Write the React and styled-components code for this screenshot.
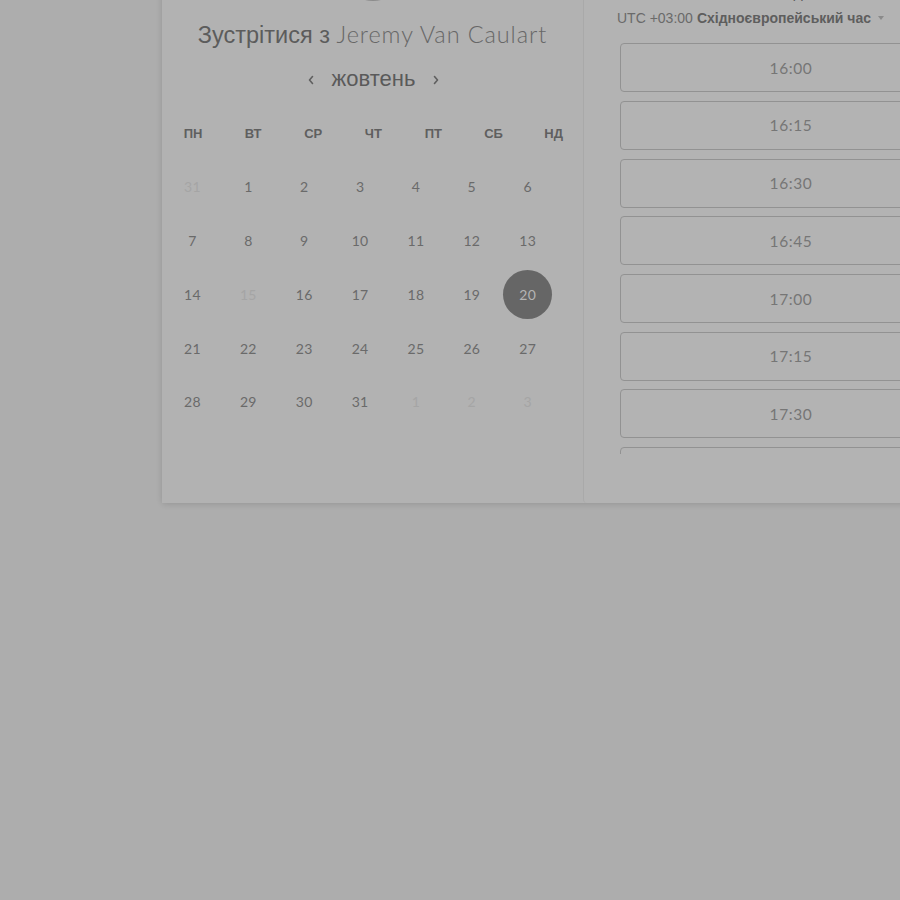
import React from 'react';
import styled, {createGlobalStyle} from 'styled-components';

const GlobalStyle = createGlobalStyle`
  html, body {
    margin: 0;
    padding: 0;
    background: #adadad;
    overflow: hidden;
    height: 900px;
  }
  body {
    font-family: "Liberation Sans", Arial, sans-serif;
  }
`;

const Page = styled.div`
  width: 900px;
  height: 900px;
  overflow: hidden;
`;

const Modal = styled.div`
  display: flex;
  width: 860px;
  height: 603px;
  margin: -100px 0 0 162px;
  background: #b3b3b3;
  border-radius: 4px;
  box-shadow: 0 1px 6px rgba(0, 0, 0, 0.14);
`;

const CalendarPanel = styled.div`
  width: 421px;
  flex-shrink: 0;
  display: flex;
  flex-direction: column;
  align-items: stretch;
  background: #b2b2b2;
`;

const Avatar = styled.div`
  width: 64px;
  height: 64px;
  border-radius: 50%;
  background: #8c8c8c;
  margin: 37px auto 0;
`;

const Title = styled.h1`
  margin: 19px 0 0;
  font-size: 23.5px;
  line-height: 28px;
  font-weight: 400;
  text-align: center;
  color: #5c5c5c;
  font-family: "Liberation Sans", Arial, sans-serif;
  white-space: nowrap;
`;

const Name = styled.span`
  font-family: Lato, "Open Sans", sans-serif;
  font-weight: 300;
  letter-spacing: 0.9px;
  color: #676767;
`;

const MonthRow = styled.div`
  margin-top: 16px;
  height: 30px;
  display: flex;
  align-items: center;
  justify-content: center;
  gap: 14px;
  padding-left: 2px;
`;

const Month = styled.div`
  font-size: 22px;
  color: #5a5a5a;
  padding-bottom: 2px;
`;

const ArrowButton = styled.button`
  border: 0;
  background: none;
  padding: 0;
  width: 14px;
  height: 14px;
  display: flex;
  align-items: center;
  justify-content: center;
  color: #5f5f5f;
`;

const WeekHeader = styled.div`
  margin: 28px 0 0 1px;
  display: grid;
  grid-template-columns: repeat(7, 60.1px);
  height: 20px;
  align-items: center;
`;

const WeekDay = styled.div`
  text-align: center;
  font-size: 13px;
  font-weight: 700;
  color: #5f5f5f;
`;

const DaysGrid = styled.div`
  margin: 17px 0 0 2.6px;
  display: grid;
  grid-template-columns: repeat(7, 55.87px);
  grid-auto-rows: 53.75px;
`;

const DayCell = styled.div`
  display: flex;
  align-items: center;
  justify-content: center;
`;

const Day = styled.div`
  width: 49px;
  height: 49px;
  border-radius: 50%;
  display: flex;
  align-items: center;
  justify-content: center;
  font-family: Lato, "Open Sans", sans-serif;
  font-size: 14px;
  letter-spacing: 0.3px;
  color: ${p => (p.$selected ? '#b4b4b4' : p.$muted ? '#a5a5a5' : '#6a6a6a')};
  background: ${p => (p.$selected ? '#666666' : 'transparent')};
`;

const TimesPanel = styled.div`
  flex: 1;
  border-left: 1px solid #a9a9a9;
  border-radius: 0 0 0 4px;
  padding-left: 33px;
  display: flex;
  flex-direction: column;
  background: #b3b3b3;
`;

const DateHeading = styled.div`
  margin: 83px 0 0 159px;
  font-size: 16px;
  line-height: 20px;
  color: #5c5c5c;
`;

const Timezone = styled.div`
  margin-top: 5px;
  height: 20px;
  display: flex;
  align-items: center;
  font-size: 14px;
  color: #6a6a6a;
  white-space: nowrap;
`;

const ZoneName = styled.b`
  margin-left: 4px;
  color: #5e5e5e;
`;

const Caret = styled.span`
  margin-left: 7px;
  width: 0;
  height: 0;
  border-left: 3.5px solid transparent;
  border-right: 3.5px solid transparent;
  border-top: 4px solid #8a8a8a;
`;

const SlotList = styled.div`
  margin: 15.3px 0 0 3px;
  height: 410.7px;
  overflow: hidden;
  display: flex;
  flex-direction: column;
  gap: 8.7px;
`;

const Slot = styled.button`
  flex-shrink: 0;
  width: 342px;
  height: 49px;
  border: 1px solid #929292;
  border-radius: 4px;
  background: transparent;
  font-family: Lato, "Open Sans", sans-serif;
  font-size: 15.5px;
  color: #767676;
  letter-spacing: 0.6px;
`;

const Chevron = ({dir}) => (
  <svg width="8" height="10" viewBox="0 0 8 10" fill="none">
    <path
      d={dir === 'left' ? 'M5.5 1.5 L2.5 5 L5.5 8.5' : 'M2.5 1.5 L5.5 5 L2.5 8.5'}
      stroke="currentColor"
      strokeWidth="1.6"
      strokeLinecap="round"
      strokeLinejoin="round"
    />
  </svg>
);

const weekDays = ['пн', 'вт', 'ср', 'чт', 'пт', 'сб', 'нд'];

const days = [
  {n: 31, muted: true}, {n: 1}, {n: 2}, {n: 3}, {n: 4}, {n: 5}, {n: 6},
  {n: 7}, {n: 8}, {n: 9}, {n: 10}, {n: 11}, {n: 12}, {n: 13},
  {n: 14}, {n: 15, muted: true}, {n: 16}, {n: 17}, {n: 18}, {n: 19}, {n: 20, selected: true},
  {n: 21}, {n: 22}, {n: 23}, {n: 24}, {n: 25}, {n: 26}, {n: 27},
  {n: 28}, {n: 29}, {n: 30}, {n: 31}, {n: 1, muted: true}, {n: 2, muted: true}, {n: 3, muted: true},
];

const slots = ['16:00', '16:15', '16:30', '16:45', '17:00', '17:15', '17:30', '17:45'];

function App() {
  return (
    <Page>
      <GlobalStyle/>
      <Modal>
        <CalendarPanel>
          <Avatar/>
          <Title>
            Зустрітися з <Name>Jeremy Van Caulart</Name>
          </Title>
          <MonthRow>
            <ArrowButton><Chevron dir="left"/></ArrowButton>
            <Month>жовтень</Month>
            <ArrowButton><Chevron dir="right"/></ArrowButton>
          </MonthRow>
          <WeekHeader>
            {weekDays.map(d => (
              <WeekDay key={d}>{d.toUpperCase()}</WeekDay>
            ))}
          </WeekHeader>
          <DaysGrid>
            {days.map((d, i) => (
              <DayCell key={i}>
                <Day $muted={d.muted} $selected={d.selected}>{d.n}</Day>
              </DayCell>
            ))}
          </DaysGrid>
        </CalendarPanel>
        <TimesPanel>
          <DateHeading>неділя, 20 жовтня</DateHeading>
          <Timezone>
            UTC +03:00 <ZoneName>Східноєвропейський час</ZoneName>
            <Caret/>
          </Timezone>
          <SlotList>
            {slots.map(s => (
              <Slot key={s}>{s}</Slot>
            ))}
          </SlotList>
        </TimesPanel>
      </Modal>
    </Page>
  );
}

export default App;
